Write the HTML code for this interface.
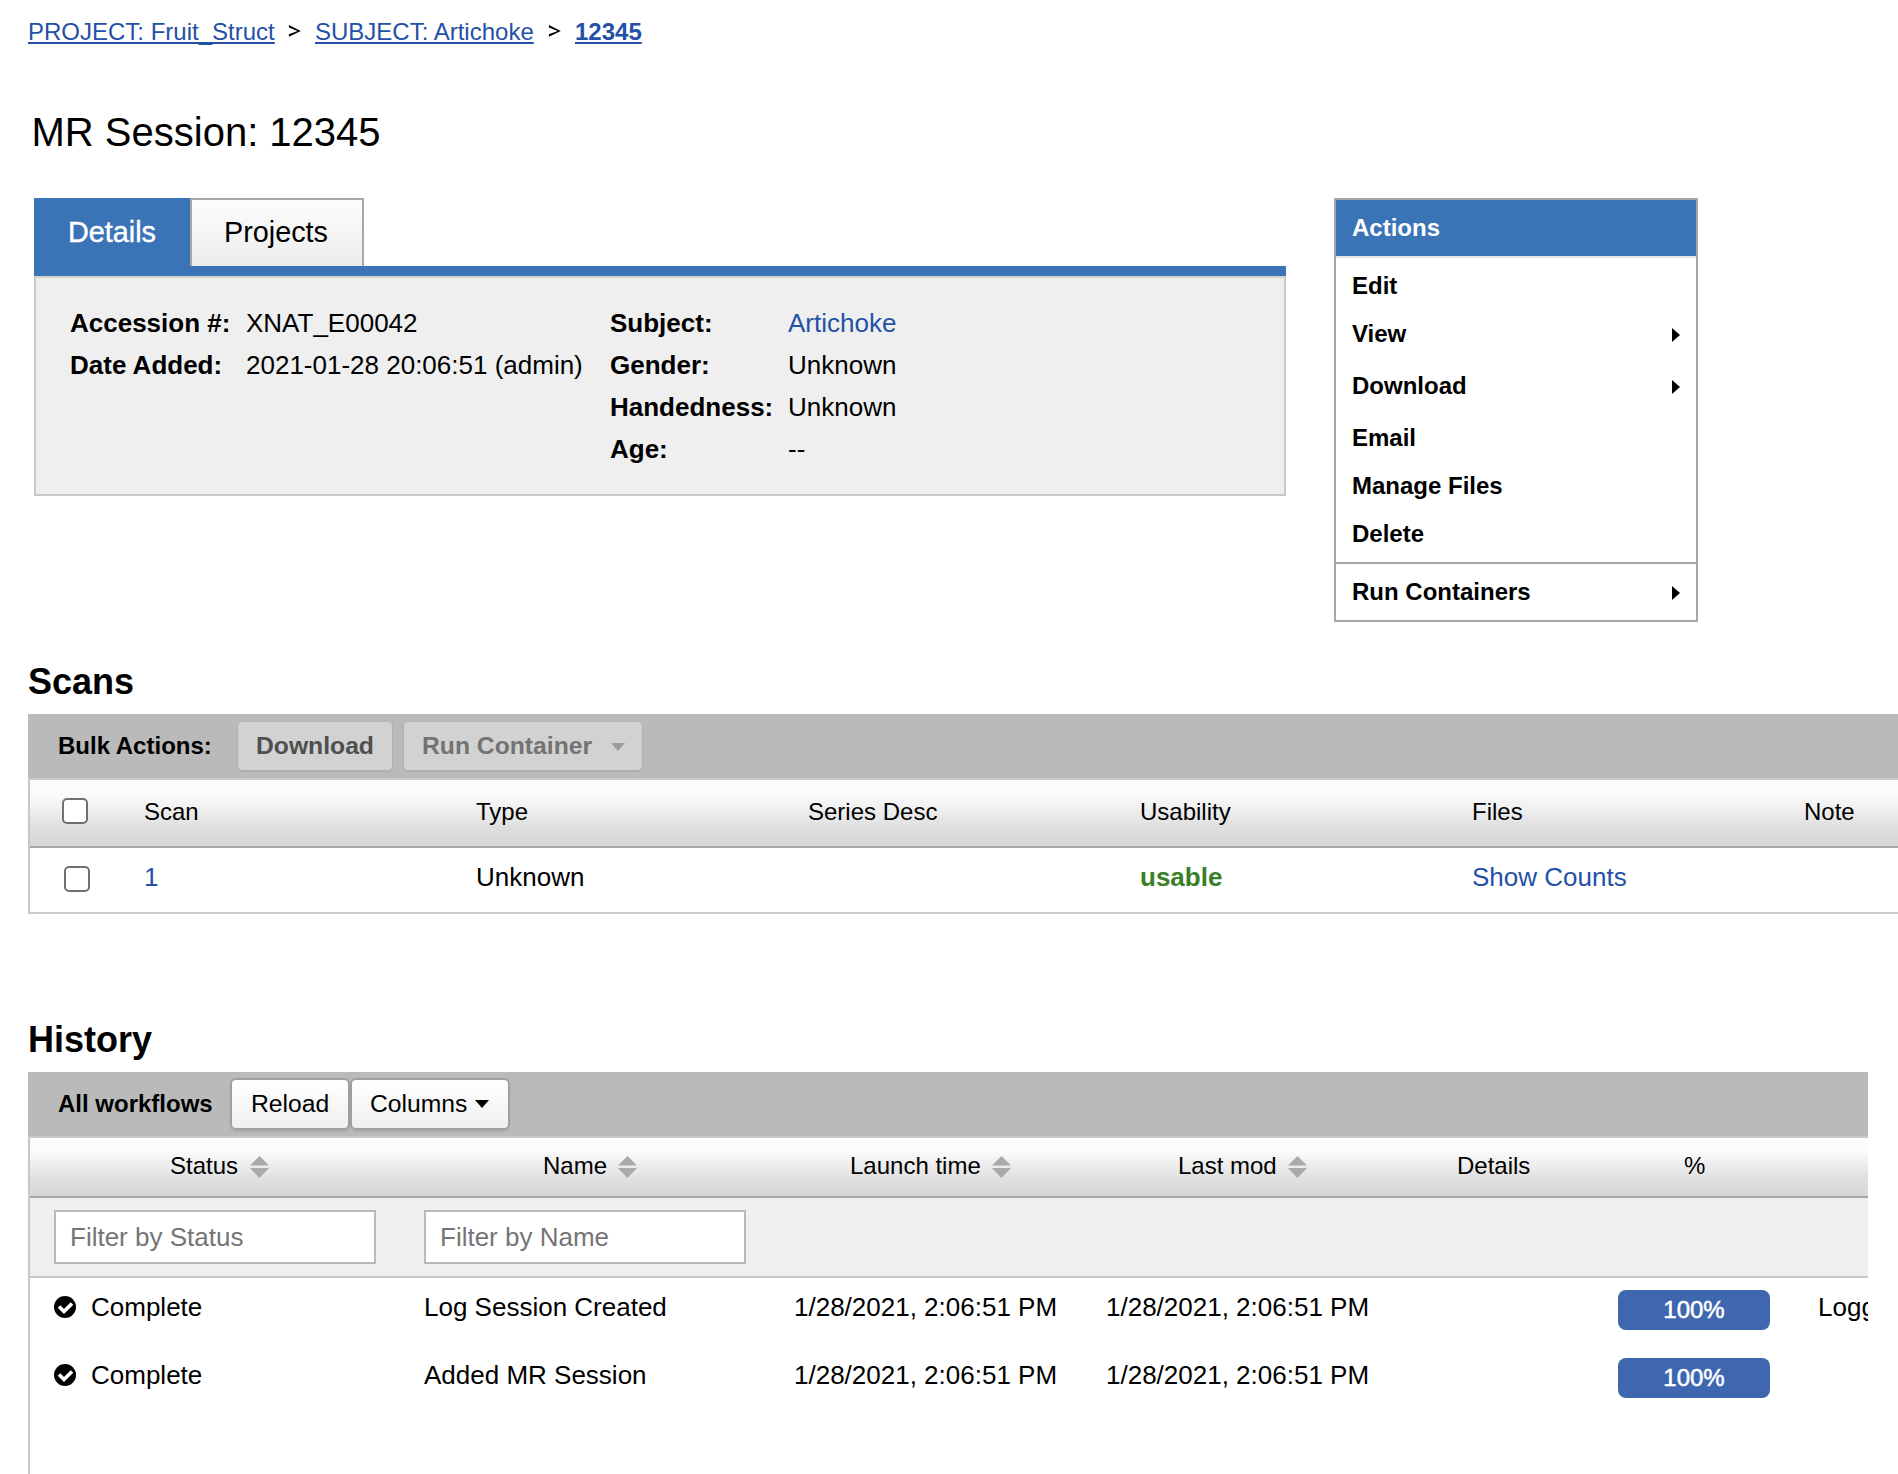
<!DOCTYPE html>
<html><head><meta charset="utf-8">
<style>
html,body{margin:0;padding:0;background:#fff;width:1898px;height:1474px;overflow:hidden;position:relative}
body{font-family:"Liberation Sans",sans-serif;color:#000}
.a{position:absolute}
.t{position:absolute;line-height:40px;white-space:nowrap}
.s24{font-size:24px}
.s26{font-size:26px}
.b{font-weight:bold}
.lnk{color:#2450a6}
.tri-r{position:absolute;width:0;height:0;border-top:7px solid transparent;border-bottom:7px solid transparent;border-left:8.5px solid #000}
.cb{position:absolute;width:22px;height:22px;border:2px solid #707070;border-radius:5px;background:#fff}
.hdr{position:absolute;background:linear-gradient(#fcfcfc 0%,#fafafa 24%,#ededed 47%,#e0e0e0 70%,#d8d8d8 92%,#d7d7d7 100%)}
.sort{position:absolute;width:19px;height:22px}
</style></head>
<body>

<!-- breadcrumb -->
<div class="t s24" style="left:28px;top:12px"><span class="lnk" style="text-decoration:underline">PROJECT: Fruit_Struct</span></div>
<svg class="a" style="left:288px;top:24px" width="14" height="14" viewBox="0 0 14 14"><path d="M0.9 1.1L12.8 6.95L0.9 12.8L0.9 10.3L9.6 6.95L0.9 3.6Z" fill="#000"/></svg>
<div class="t s24" style="left:315px;top:12px"><span class="lnk" style="text-decoration:underline">SUBJECT: Artichoke</span></div>
<svg class="a" style="left:548px;top:24px" width="14" height="14" viewBox="0 0 14 14"><path d="M0.9 1.1L12.8 6.95L0.9 12.8L0.9 10.3L9.6 6.95L0.9 3.6Z" fill="#000"/></svg>
<div class="t s24 b" style="left:575px;top:12px"><span class="lnk" style="text-decoration:underline">12345</span></div>

<!-- title -->
<div class="t" style="left:31.5px;top:112px;font-size:40px">MR Session: 12345</div>

<!-- tabs -->
<div class="a" style="left:34px;top:198px;width:156px;height:78px;background:#3a74b7"></div>
<div class="t" style="left:68px;top:212px;font-size:28.8px;color:#fff;-webkit-text-stroke:0.4px #fff">Details</div>
<div class="a" style="left:190px;top:198px;width:170px;height:66px;border:2px solid #a8a8a8;border-bottom:none;background:linear-gradient(#fdfdfd,#ececec)"></div>
<div class="t" style="left:224px;top:212px;font-size:28.8px">Projects</div>
<div class="a" style="left:34px;top:266px;width:1252px;height:10px;background:#3a74b7"></div>
<div class="a" style="left:34px;top:276px;width:1248px;height:216px;border:2px solid #c8c8c8;border-top-color:#d6d2ce;background:#efefef"></div>

<!-- details -->
<div class="t s26 b" style="left:70px;top:303px">Accession #:</div>
<div class="t s26" style="left:246px;top:303px">XNAT_E00042</div>
<div class="t s26 b" style="left:70px;top:345px">Date Added:</div>
<div class="t s26" style="left:246px;top:345px">2021-01-28 20:06:51 (admin)</div>
<div class="t s26 b" style="left:610px;top:303px">Subject:</div>
<div class="t s26 lnk" style="left:788px;top:303px">Artichoke</div>
<div class="t s26 b" style="left:610px;top:345px">Gender:</div>
<div class="t s26" style="left:788px;top:345px">Unknown</div>
<div class="t s26 b" style="left:610px;top:387px">Handedness:</div>
<div class="t s26" style="left:788px;top:387px">Unknown</div>
<div class="t s26 b" style="left:610px;top:429px">Age:</div>
<div class="t s26" style="left:788px;top:429px">--</div>

<!-- actions -->
<div class="a" style="left:1334px;top:198px;width:360px;height:420px;border:2px solid #a6a6a6;background:#fff"></div>
<div class="a" style="left:1336px;top:200px;width:360px;height:56px;background:#3a74b7"></div>
<div class="a" style="left:1336px;top:256px;width:360px;height:2px;background:#e6e2de"></div>
<div class="t s24 b" style="left:1352px;top:208px;color:#fff">Actions</div>
<div class="t s24 b" style="left:1352px;top:266px">Edit</div>
<div class="t s24 b" style="left:1352px;top:314px">View</div>
<div class="tri-r" style="left:1672px;top:328px"></div>
<div class="t s24 b" style="left:1352px;top:366px">Download</div>
<div class="tri-r" style="left:1672px;top:380px"></div>
<div class="t s24 b" style="left:1352px;top:418px">Email</div>
<div class="t s24 b" style="left:1352px;top:466px">Manage Files</div>
<div class="t s24 b" style="left:1352px;top:514px">Delete</div>
<div class="a" style="left:1336px;top:562px;width:360px;height:2px;background:#a6a6a6"></div>
<div class="t s24 b" style="left:1352px;top:572px">Run Containers</div>
<div class="tri-r" style="left:1672px;top:586px"></div>

<!-- scans -->
<div class="t b" style="left:28px;top:662px;font-size:36px">Scans</div>
<div class="a" style="left:28px;top:714px;width:1870px;height:64px;background:#bababa"></div>
<div class="t s24 b" style="left:58px;top:726px">Bulk Actions:</div>
<div class="a" style="left:238px;top:722px;width:154px;height:48px;border-radius:4px;background:#d2d2d2;box-shadow:0 1px 2px 1px rgba(0,0,0,.07)"></div>
<div class="t b" style="left:256px;top:726px;font-size:24.7px;color:#4f4f4f">Download</div>
<div class="a" style="left:404px;top:722px;width:238px;height:48px;border-radius:4px;background:#d2d2d2;box-shadow:0 1px 2px 1px rgba(0,0,0,.07)"></div>
<div class="t b" style="left:422px;top:726px;font-size:24.7px;color:#737373">Run Container</div>
<div class="a" style="left:611px;top:743px;width:0;height:0;border-left:7px solid transparent;border-right:7px solid transparent;border-top:8px solid #9c9c9c"></div>

<div class="a" style="left:28px;top:778px;width:1870px;height:136px;border-left:2px solid #c8c8c8"></div>
<div class="a" style="left:30px;top:778px;width:1868px;height:2px;background:#c9c9c9"></div>
<div class="hdr" style="left:30px;top:780px;width:1868px;height:66px"></div>
<div class="a" style="left:30px;top:846px;width:1868px;height:2px;background:#a8a8a8"></div>
<div class="a" style="left:30px;top:912px;width:1868px;height:2px;background:#cccccc"></div>
<div class="cb" style="left:62px;top:798px"></div>
<div class="t s24" style="left:144px;top:792px">Scan</div>
<div class="t s24" style="left:476px;top:792px">Type</div>
<div class="t s24" style="left:808px;top:792px">Series Desc</div>
<div class="t s24" style="left:1140px;top:792px">Usability</div>
<div class="t s24" style="left:1472px;top:792px">Files</div>
<div class="t s24" style="left:1804px;top:792px">Note</div>
<div class="cb" style="left:64px;top:866px"></div>
<div class="t s26 lnk" style="left:144px;top:857px">1</div>
<div class="t s26" style="left:476px;top:857px">Unknown</div>
<div class="t s26 b" style="left:1140px;top:857px;color:#3a7f28">usable</div>
<div class="t s26 lnk" style="left:1472px;top:857px">Show Counts</div>

<!-- history -->
<div class="t b" style="left:28px;top:1020px;font-size:36px">History</div>
<div class="a" style="left:28px;top:1072px;width:1840px;height:64px;background:#bababa"></div>
<div class="t s24 b" style="left:58px;top:1084px">All workflows</div>
<div class="a" style="left:230px;top:1078px;width:116px;height:48px;border:2px solid #a0a0a0;border-radius:6px;background:linear-gradient(#ffffff,#efefef);box-shadow:0 2px 2px rgba(0,0,0,.08)"></div>
<div class="t" style="left:251px;top:1084px;font-size:24.7px">Reload</div>
<div class="a" style="left:350px;top:1078px;width:156px;height:48px;border:2px solid #a0a0a0;border-radius:6px;background:linear-gradient(#ffffff,#efefef);box-shadow:0 2px 2px rgba(0,0,0,.08)"></div>
<div class="t" style="left:370px;top:1084px;font-size:24.7px">Columns</div>
<div class="a" style="left:475px;top:1100px;width:0;height:0;border-left:7px solid transparent;border-right:7px solid transparent;border-top:8px solid #000"></div>

<div class="a" style="left:28px;top:1136px;width:1838px;height:338px;border-left:2px solid #c8c8c8"></div>
<div class="a" style="left:30px;top:1136px;width:1838px;height:2px;background:#c9c9c9"></div>
<div class="hdr" style="left:30px;top:1138px;width:1838px;height:58px"></div>
<div class="a" style="left:30px;top:1196px;width:1838px;height:2px;background:#a8a8a8"></div>
<div class="a" style="left:30px;top:1198px;width:1838px;height:78px;background:#efefef"></div>
<div class="a" style="left:30px;top:1276px;width:1838px;height:2px;background:#c8c8c8"></div>

<div class="t s24" style="left:170px;top:1146px">Status</div>
<svg class="sort" style="left:250px;top:1156px" viewBox="0 0 19 22"><path d="M9.5 0L19 9.5H0Z M0 12H19L9.5 22Z" fill="#aaaaaa"/></svg>
<div class="t s24" style="left:543px;top:1146px">Name</div>
<svg class="sort" style="left:618px;top:1156px" viewBox="0 0 19 22"><path d="M9.5 0L19 9.5H0Z M0 12H19L9.5 22Z" fill="#aaaaaa"/></svg>
<div class="t s24" style="left:850px;top:1146px">Launch time</div>
<svg class="sort" style="left:992px;top:1156px" viewBox="0 0 19 22"><path d="M9.5 0L19 9.5H0Z M0 12H19L9.5 22Z" fill="#aaaaaa"/></svg>
<div class="t s24" style="left:1178px;top:1146px">Last mod</div>
<svg class="sort" style="left:1288px;top:1156px" viewBox="0 0 19 22"><path d="M9.5 0L19 9.5H0Z M0 12H19L9.5 22Z" fill="#aaaaaa"/></svg>
<div class="t s24" style="left:1457px;top:1146px">Details</div>
<div class="t s24" style="left:1684px;top:1146px">%</div>

<div class="a" style="left:54px;top:1210px;width:318px;height:50px;border:2px solid #b9b9b9;background:#fff"></div>
<div class="t s26" style="left:70px;top:1217px;color:#757575">Filter by Status</div>
<div class="a" style="left:424px;top:1210px;width:318px;height:50px;border:2px solid #b9b9b9;background:#fff"></div>
<div class="t s26" style="left:440px;top:1217px;color:#757575">Filter by Name</div>

<svg class="a" style="left:54px;top:1296px" width="22" height="22" viewBox="0 0 22 22"><circle cx="11" cy="11" r="11" fill="#000"/><path d="M5 10.5L10 15.5L18 7.5" stroke="#fff" stroke-width="3.6" fill="none" stroke-linecap="butt"/></svg>
<div class="t s26" style="left:91px;top:1287px">Complete</div>
<div class="t s26" style="left:424px;top:1287px">Log Session Created</div>
<div class="t s26" style="left:794px;top:1287px">1/28/2021, 2:06:51 PM</div>
<div class="t s26" style="left:1106px;top:1287px">1/28/2021, 2:06:51 PM</div>
<div class="a" style="left:1618px;top:1290px;width:152px;height:40px;border-radius:8px;background:#3e67b0;color:#fff;font-size:24px;line-height:40px;text-align:center;-webkit-text-stroke:0.5px #fff">100%</div>
<div class="a" style="left:1818px;top:1287px;width:50px;height:40px;overflow:hidden"><div class="t s26" style="left:0;top:0">Logged</div></div>

<svg class="a" style="left:54px;top:1364px" width="22" height="22" viewBox="0 0 22 22"><circle cx="11" cy="11" r="11" fill="#000"/><path d="M5 10.5L10 15.5L18 7.5" stroke="#fff" stroke-width="3.6" fill="none" stroke-linecap="butt"/></svg>
<div class="t s26" style="left:91px;top:1355px">Complete</div>
<div class="t s26" style="left:424px;top:1355px">Added MR Session</div>
<div class="t s26" style="left:794px;top:1355px">1/28/2021, 2:06:51 PM</div>
<div class="t s26" style="left:1106px;top:1355px">1/28/2021, 2:06:51 PM</div>
<div class="a" style="left:1618px;top:1358px;width:152px;height:40px;border-radius:8px;background:#3e67b0;color:#fff;font-size:24px;line-height:40px;text-align:center;-webkit-text-stroke:0.5px #fff">100%</div>

</body></html>
